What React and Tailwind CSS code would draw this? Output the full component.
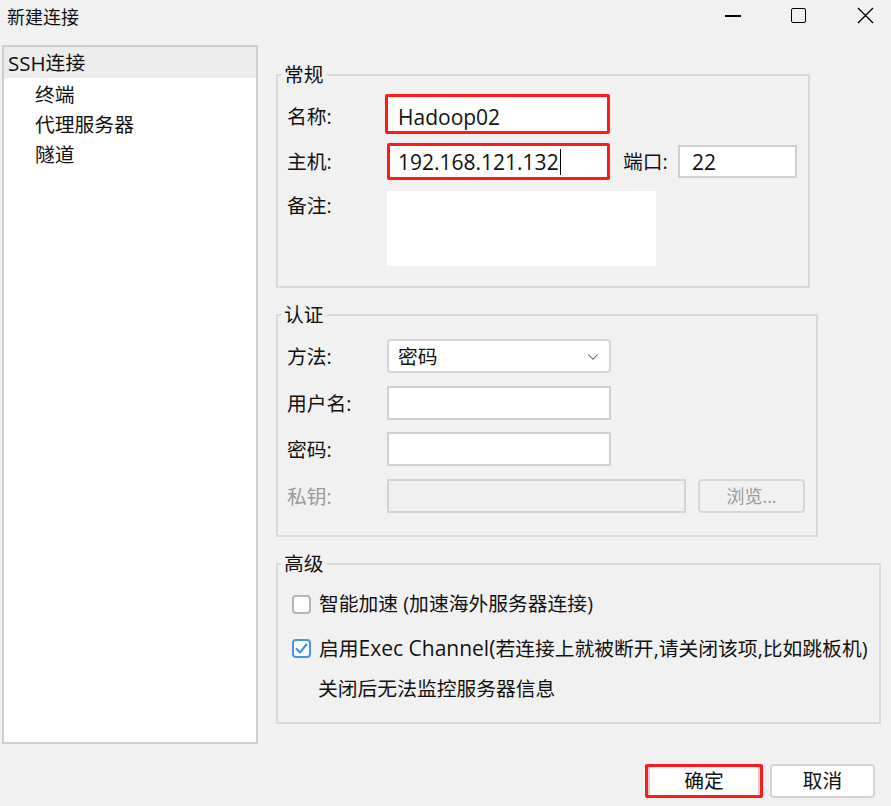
import React from 'react';
import { ChevronDown } from 'lucide-react';

const font = { fontFamily: '"Open Sans", "Noto Sans CJK SC", sans-serif' };

function Field({ className = '', children }) {
  return (
    <div className={`bg-white border-2 border-[#cfcfcf] ${className}`}>{children}</div>
  );
}

export default function App() {
  return (
    <div
      style={font}
      className="w-[891px] h-[806px] bg-[#f1f1f1] text-[#111] text-[19.8px] leading-[26px] overflow-hidden select-none"
    >
      {/* Title bar */}
      <div className="h-[45px] flex items-start">
        <div className="pl-[7px] pt-[4px] text-[18px] leading-[26px]">新建连接</div>
        <div className="ml-auto flex items-start">
          <div className="w-[16px] h-[1.5px] bg-black mt-[15px] mr-[50px]" />
          <div className="w-[15px] h-[15px] border-[1.5px] border-black rounded-[2px] mt-[8px] mr-[51px]" />
          <svg className="mt-[7px] mr-[17px]" width="17" height="17" viewBox="0 0 17 17">
            <path d="M1 1L16 16M16 1L1 16" stroke="#000" strokeWidth="1.4" fill="none" />
          </svg>
        </div>
      </div>

      <div className="flex items-start">
        {/* Tree */}
        <div className="ml-[2px] w-[256px] h-[699px] bg-white border-2 border-[#cdcdcd]">
          <div className="h-[31px] bg-[#ececec] pl-[4px] flex items-center">
            <span className="text-[20.5px]">SSH</span>连接
          </div>
          <div className="mt-[2px] pl-[31px]">
            <div className="h-[30px] flex items-center">终端</div>
            <div className="h-[30px] flex items-center">代理服务器</div>
            <div className="h-[30px] flex items-center">隧道</div>
          </div>
        </div>

        {/* Right column */}
        <div className="ml-[18px] w-[605px] pt-[19px]">
          {/* 常规 */}
          <fieldset className="w-[534px] border-2 border-[#d9d9d9] pb-[20px]">
            <legend className="ml-[3px] px-[3px] leading-[22px]">常规</legend>
            <div className="pl-[9px] pt-[8px]">
              <div className="flex items-center h-[40px]">
                <div className="w-[98px] pt-[5px]">名称:</div>
                <div className="w-[225px] h-[40px] border-[3px] border-[#ff1a1a] rounded-[2px] bg-white flex items-center pl-[10px] pt-[5px] text-[21px]">
                  Hadoop02
                </div>
              </div>
              <div className="flex items-center h-[37px] mt-[9px]">
                <div className="w-[100px] pt-[1px]">主机:</div>
                <div className="w-[223px] h-[37px] border-[3px] border-[#ff1a1a] rounded-[2px] bg-white flex items-center pl-[8px] pt-[1px] text-[21px]">
                  192.168.121.132
                  <span className="w-px h-[26px] bg-black ml-[1px]" />
                </div>
                <div className="ml-[13px] w-[55px] pt-[1px]">端口:</div>
                <Field className="w-[119px] h-[33px] flex items-center pl-[12px] pt-[1px] text-[21px]">22</Field>
              </div>
              <div className="flex items-start mt-[11px]">
                <div className="w-[100px] pt-[2px]">备注:</div>
                <div className="w-[269px] h-[75px] bg-white" />
              </div>
            </div>
          </fieldset>

          {/* 认证 */}
          <fieldset className="mt-[16px] w-[542px] border-2 border-[#d9d9d9] pb-[22px]">
            <legend className="ml-[3px] px-[3px] leading-[22px]">认证</legend>
            <div className="pl-[9px] pt-[13px]">
              <div className="flex items-center h-[34px]">
                <div className="w-[100px] pt-[2px]">方法:</div>
                <div className="w-[224px] h-[34px] bg-white border-2 border-[#d3d3d3] rounded-[4px] flex items-center pl-[9px] pr-[7px] pt-[2px]">
                  密码
                  <ChevronDown className="ml-auto" size={18} color="#555" strokeWidth={1.4} />
                </div>
              </div>
              <div className="flex items-center h-[34px] mt-[13px]">
                <div className="w-[100px] pt-[2px]">用户名:</div>
                <Field className="w-[224px] h-[34px]" />
              </div>
              <div className="flex items-center h-[34px] mt-[12px]">
                <div className="w-[100px] pt-[2px]">密码:</div>
                <Field className="w-[224px] h-[34px]" />
              </div>
              <div className="flex items-center h-[34px] mt-[13px]">
                <div className="w-[100px] pt-[2px] text-[#9a9a9a]">私钥:</div>
                <div className="w-[299px] h-[34px] bg-[#f0f0f0] border-2 border-[#d3d3d3]" />
                <div className="ml-[12px] w-[107px] h-[34px] border-2 border-[#d6d6d6] rounded-[4px] flex items-center justify-center text-[#9a9a9a] text-[18px]">
                  浏览...
                </div>
              </div>
            </div>
          </fieldset>

          {/* 高级 */}
          <fieldset className="mt-[16px] w-[605px] border-2 border-[#d9d9d9] pb-[19px]">
            <legend className="ml-[3px] px-[3px] leading-[22px]">高级</legend>
            <div className="pt-[14px]">
              <label className="flex items-center h-[30px] pl-[14px]">
                <span className="w-[19px] h-[19px] bg-white border-2 border-[#b5b5b5] rounded-[4px]" />
                <span className="ml-[8px]">智能加速 (加速海外服务器连接)</span>
              </label>
              <label className="flex items-center h-[30px] pl-[14px] mt-[14px]">
                <span className="w-[19px] h-[19px] bg-white border-2 border-[#4a94e8] rounded-[4px] flex items-center justify-center">
                  <svg width="13" height="13" viewBox="0 0 13 13">
                    <path d="M1.5 7L5 10.5L11.5 2.5" stroke="#3a8ee6" strokeWidth="2" fill="none" strokeLinecap="round" strokeLinejoin="round" />
                  </svg>
                </span>
                <span className="ml-[8px]">
                  启用<span className="text-[21px]">Exec Channel(</span>若连接上就被断开,请关闭该项,比如跳板机)
                </span>
              </label>
              <div className="h-[28px] mt-[12px] pl-[40px] flex items-center">关闭后无法监控服务器信息</div>
            </div>
          </fieldset>

          {/* Buttons */}
          <div className="mt-[40px] flex justify-end pr-[6px] gap-[7px]">
            <div className="w-[118px] h-[34px] border-[3px] border-[#ff1a1a] rounded-[2px] bg-white flex">
              <div className="flex-1 border-x-2 border-[#d0d0d0] flex items-center justify-center">确定</div>
            </div>
            <div className="w-[105px] h-[34px] bg-white border-2 border-[#d3d3d3] rounded-[4px] flex items-center justify-center">
              取消
            </div>
          </div>
        </div>
      </div>
    </div>
  );
}
